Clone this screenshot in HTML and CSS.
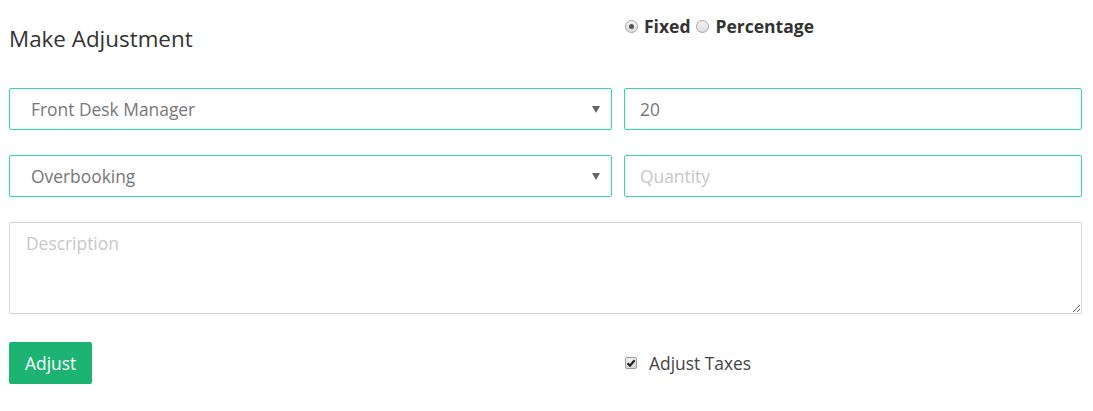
FILE: index.html
```html
<!DOCTYPE html>
<html>
<head>
<meta charset="utf-8">
<link rel="stylesheet" href="styles.css">
</head>
<body>
<form class="form">
  <h2 class="title">Make Adjustment</h2>
  <div class="mode">
    <label class="opt"><span class="radio checked"></span><b>Fixed</b></label>
    <label class="opt"><span class="radio"></span><b>Percentage</b></label>
  </div>

  <div class="field select row1"><span>Front Desk Manager</span><span class="caret"></span></div>
  <div class="field input value row1">20</div>

  <div class="field select row2"><span>Overbooking</span><span class="caret"></span></div>
  <div class="field input placeholder row2">Quantity</div>

  <textarea class="desc" placeholder="Description"></textarea>

  <div class="actions"><button type="button" class="btn">Adjust</button></div>
  <label class="check"><span class="box"><svg viewBox="0 0 10 10" width="10" height="10"><path d="M1.5 5.2 L4 7.6 L8.6 2.2" fill="none" stroke="#222" stroke-width="2.2"/></svg></span>Adjust Taxes</label>
</form>
</body>
</html>
```
FILE: styles.css
```css
* { box-sizing: border-box; }
body {
  margin: 0;
  background: #fff;
  font-family: "Open Sans", "Liberation Sans", sans-serif;
  color: #555;
}
.form {
  display: grid;
  grid-template-columns: 603px 458px;
  column-gap: 12px;
  padding: 0 11px 0 9px;
  align-items: start;
}
.title {
  margin: 26px 0 0;
  font-size: 22.4px;
  font-weight: 400;
  line-height: 26px;
  color: #333;
}
.mode {
  margin-top: 16px;
  display: flex;
  align-items: center;
  gap: 5px;
  font-size: 17.5px;
  line-height: 20px;
  color: #333;
}
.opt { display: flex; align-items: center; gap: 6px; margin-left: 1px; }
.opt b { font-weight: 700; }
.radio {
  width: 13px; height: 13px;
  border-radius: 50%;
  border: 1px solid #a6a6a6;
  background: linear-gradient(#f4f4f4, #dcdcdc);
  display: inline-flex; align-items: center; justify-content: center;
}
.radio.checked::after {
  content: ""; width: 5px; height: 5px; border-radius: 50%; background: #555;
}
.field {
  height: 42px;
  border: 1px solid #2fdc97;
  border-radius: 2px;
  font-size: 17.4px;
  display: flex;
  align-items: center;
  color: #777;
}
.select { padding: 0 11px 0 21px; justify-content: space-between; }
.row1 { margin-top: 36px; }
.row2 { margin-top: 25px; }
.caret {
  width: 0; height: 0;
  border-left: 4px solid transparent;
  border-right: 4px solid transparent;
  border-top: 7px solid #666;
}
.input { padding: 0 15px; }
.placeholder { color: #c8c8c8; }
.desc {
  grid-column: 1 / 3;
  margin: 25px 0 0;
  height: 92px;
  border: 1px solid #d4d4d4;
  border-radius: 2px;
  padding: 8px 16px;
  font-family: inherit;
  font-size: 17.4px;
  color: #555;
  display: block;
  resize: vertical;
}
.desc::placeholder { color: #c8c8c8; }
.actions { margin-top: 28px; }
.btn {
  height: 42px;
  padding: 0 16px;
  background: #1db372;
  border: none;
  border-radius: 2px;
  color: #fff;
  font-family: inherit;
  font-size: 17.4px;
}
.check {
  margin-top: 28px;
  height: 42px;
  display: flex;
  align-items: center;
  gap: 12px;
  font-size: 17.4px;
  color: #444;
  padding-left: 1px;
}
.box {
  width: 12px; height: 12px;
  border: 1px solid #9a9a9a;
  border-radius: 2px;
  background: linear-gradient(#f2f2f2, #d8d8d8);
  display: inline-flex; align-items: center; justify-content: center;
}
.box svg { display: block; }
```
